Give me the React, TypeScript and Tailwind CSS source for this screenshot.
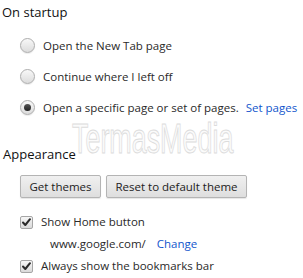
import React from "react";

const font = { fontFamily: '"Open Sans", "Noto Sans", sans-serif' };

function Radio({ checked }: { checked?: boolean }) {
  return (
    <span className="relative inline-flex h-[15px] w-[15px] shrink-0 items-center justify-center rounded-full border border-[#adadad] bg-gradient-to-b from-[#f8f8f8] to-[#dcdcdc] shadow-[0_1px_1px_rgba(0,0,0,0.08)]">
      {checked && (
        <span className="h-[7px] w-[7px] rounded-full bg-gradient-to-b from-[#555] to-[#222]" />
      )}
    </span>
  );
}

function Checkbox() {
  return (
    <span className="inline-flex h-[13px] w-[13px] shrink-0 items-center justify-center rounded-[2px] border border-[#a6a6a6] bg-gradient-to-b from-[#f6f6f6] to-[#dadada]">
      <svg width="11" height="11" viewBox="0 0 11 11">
        <path d="M2 5.5 L4.3 8 L9 2.2" fill="none" stroke="#2a2a2a" strokeWidth="2" strokeLinecap="round" strokeLinejoin="round" />
      </svg>
    </span>
  );
}

function Button({ children, w }: { children: React.ReactNode; w: string }) {
  return (
    <button
      className={`${w} h-[23px] whitespace-nowrap rounded-[2px] border border-[#b4b4b4] bg-gradient-to-b from-[#f0f0f0] to-[#dedede] text-[11.5px] text-[#222] shadow-[0_1px_1px_rgba(0,0,0,0.1)]`}
    >
      {children}
    </button>
  );
}

export default function App() {
  return (
    <div className="relative h-[278px] w-[303px] overflow-hidden whitespace-nowrap bg-white text-[#2a2a2a]" style={font}>
      <div className="flex h-[26px] items-center pl-[2px] text-[13px] text-[#111]">On startup</div>
      <div className="flex flex-col pt-[4px] pl-[20px] text-[11.5px]">
        <div className="flex h-[31px] items-center gap-[8px]">
          <Radio />
          <span>Open the New Tab page</span>
        </div>
        <div className="flex h-[31px] items-center gap-[8px]">
          <Radio />
          <span>Continue where I left off</span>
        </div>
        <div className="flex h-[31px] items-center gap-[8px]">
          <Radio checked />
          <span>Open a specific page or set of pages.</span>
          <span className="-ml-[1px] text-[#1155cc]">Set pages</span>
        </div>
      </div>
      <div className="mt-[19px] flex h-[26px] items-center pl-[3px] text-[13px] text-[#111]">Appearance</div>
      <div className="mt-[7px] flex gap-[5px] pl-[20px]">
        <Button w="w-[81px]">Get themes</Button>
        <Button w="w-[141px]">Reset to default theme</Button>
      </div>
      <div className="mt-[13px] flex flex-col pl-[20px] text-[11.5px]">
        <div className="flex h-[22px] items-center gap-[8px]">
          <Checkbox />
          <span>Show Home button</span>
        </div>
        <div className="flex h-[22px] items-center gap-[11px] pl-[30px]">
          <span>www.google.com/</span>
          <span className="text-[#1155cc]">Change</span>
        </div>
        <div className="flex h-[22px] items-center gap-[8px]">
          <Checkbox />
          <span>Always show the bookmarks bar</span>
        </div>
      </div>
      <div
        className="pointer-events-none absolute left-[72px] top-[118px] origin-left scale-x-[0.64] text-[42px] leading-none text-[#fbfbfb] [-webkit-text-stroke:1px_#dcdcdc]"
        style={{ fontFamily: '"Liberation Sans", sans-serif' }}
      >
        TermasMedia
      </div>
    </div>
  );
}
